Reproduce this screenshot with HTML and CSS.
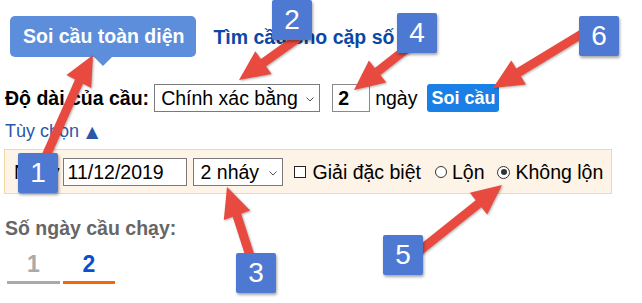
FILE: index.html
```html
<!DOCTYPE html>
<html lang="vi">
<head>
<meta charset="utf-8">
<title>Soi cầu</title>
<link rel="stylesheet" href="styles.css">
</head>
<body>
<div class="page">
  <div class="tabs">
    <span class="tab-active">Soi cầu toàn diện</span>
    <a class="tab-link">Tìm cầu cho cặp số</a>
  </div>

  <div class="row-length">
    <span class="label">Độ dài của cầu:</span>
    <div class="select sel-len">
      <span>Chính xác bằng</span>
      <svg class="chev" width="8" height="5" viewBox="0 0 8 5"><path d="M0.5 0.5 L4 4 L7.5 0.5" fill="none" stroke="#555" stroke-width="1"/></svg>
    </div>
    <div class="input num">2</div>
    <span class="unit">ngày</span>
    <button class="btn">Soi cầu</button>
  </div>

  <div class="toggle">Tùy chọn <span class="tri">▲</span></div>

  <div class="options">
    <span class="opt-label">Ngày</span>
    <div class="input date">11/12/2019</div>
    <div class="select sel-nhay">
      <span>2 nháy</span>
      <svg class="chev" width="8" height="5" viewBox="0 0 8 5"><path d="M0.5 0.5 L4 4 L7.5 0.5" fill="none" stroke="#555" stroke-width="1"/></svg>
    </div>
    <span class="check"><span class="sq"></span>Giải đặc biệt</span>
    <span class="radio r1"><span class="circ"></span>Lộn</span>
    <span class="radio r2"><span class="circ on"></span>Không lộn</span>
  </div>

  <div class="runs-title">Số ngày cầu chạy:</div>
  <div class="runs">
    <span class="run">1</span>
    <span class="run active">2</span>
  </div>
</div>

<div class="annot">
  <svg class="arrows" width="642" height="303" viewBox="0 0 642 303">
    <g class="arrow">
      <line x1="42" y1="165" x2="79.8" y2="79.7"/>
      <polygon points="93,55 91.2,88.1 66.5,74.9"/>
    </g>
    <g class="arrow">
      <line x1="298" y1="38" x2="261.8" y2="63.8"/>
      <polygon points="239,80 271.5,74 255.3,51.2"/>
    </g>
    <g class="arrow">
      <line x1="252" y1="262" x2="236.3" y2="213.4"/>
      <polygon points="227,187 250.2,210.6 223.8,220"/>
    </g>
    <g class="arrow">
      <line x1="410" y1="46" x2="376" y2="72.7"/>
      <polygon points="354,90 386.3,82.5 368.9,60.5"/>
    </g>
    <g class="arrow">
      <line x1="418" y1="252" x2="480" y2="202.5"/>
      <polygon points="502,185 487.2,214.6 469.8,192.8"/>
    </g>
    <g class="arrow">
      <line x1="585" y1="32" x2="516.9" y2="73.4"/>
      <polygon points="493,88 525.9,84.4 511.3,60.4"/>
    </g>
  </svg>
  <div class="mark m1">1</div>
  <div class="mark m2">2</div>
  <div class="mark m3">3</div>
  <div class="mark m4">4</div>
  <div class="mark m5">5</div>
  <div class="mark m6">6</div>
</div>
</body>
</html>
```

FILE: styles.css
```css
* { box-sizing: border-box; }

html, body {
  margin: 0;
  padding: 0;
  background: #fff;
}

body {
  position: relative;
  width: 642px;
  height: 303px;
  overflow: hidden;
  font-family: "Liberation Sans", Arial, sans-serif;
  font-size: 19.5px;
  line-height: 22px;
  color: #000;
}

.page {
  padding: 16px 0 0 5px;
}

/* top tabs */
.tabs {
  display: flex;
  align-items: center;
}

.tab-active {
  position: relative;
  margin-left: 5px;
  height: 41px;
  line-height: 41px;
  padding: 0 12px 0 13px;
  background: #5c8edb;
  color: #fff;
  font-weight: bold;
  border-radius: 5px;
}

.tab-active::after {
  content: "";
  position: absolute;
  left: 50%;
  bottom: -9px;
  margin-left: -9px;
  border-left: 9px solid transparent;
  border-right: 9px solid transparent;
  border-top: 9px solid #5c8edb;
}

.tab-link {
  margin-left: 17px;
  color: #0c47a6;
  font-weight: bold;
}

/* length row */
.row-length {
  display: flex;
  align-items: center;
  margin-top: 27px;
  height: 28px;
}

.label {
  font-weight: bold;
}

.select {
  display: flex;
  align-items: center;
  justify-content: space-between;
  height: 28px;
  border: 1px solid #7a7a7a;
  background: #fff;
}

.chev {
  display: block;
  margin-top: 2px;
}

.sel-len {
  width: 166px;
  margin-left: 5px;
  padding: 0 5px 0 6px;
}

.input {
  display: flex;
  align-items: center;
  height: 28px;
  border: 1px solid #8a8a8a;
  background: #fff;
}

.num {
  width: 38px;
  margin-left: 12px;
  padding-left: 5px;
  font-weight: bold;
}

.unit {
  margin-left: 5px;
}

.btn {
  margin-left: 10px;
  width: 72px;
  height: 28px;
  padding: 0;
  border: none;
  border-radius: 3px;
  background: #1a80e6;
  color: #fff;
  font-family: "Liberation Sans", Arial, sans-serif;
  font-size: 18px;
  font-weight: bold;
}

/* options toggle */
.toggle {
  margin-top: 9px;
  font-size: 18px;
  line-height: 21px;
  color: #2a58a8;
}

.tri {
  margin-left: 2px;
  font-family: "DejaVu Sans", sans-serif;
  font-size: 16px;
}

/* options box */
.options {
  display: flex;
  align-items: center;
  margin-top: 7px;
  margin-left: -1px;
  width: 608px;
  height: 45px;
  padding: 1px 0 0 9px;
  border: 1px solid #f3d9a4;
  background: #fdf3e6;
}

.date {
  width: 124px;
  margin-left: 3px;
  padding-left: 4px;
  border-color: #7a7a7a;
}

.sel-nhay {
  width: 90px;
  margin-left: 6px;
  padding: 0 5px 0 7px;
}

.check,
.radio {
  display: flex;
  align-items: center;
}

.check {
  margin-left: 11px;
}

.sq {
  width: 12px;
  height: 12px;
  margin-right: 7px;
  border: 1px solid #222;
  background: #fff;
}

.r1 { margin-left: 14px; }
.r2 { margin-left: 13px; }

.circ {
  position: relative;
  width: 12px;
  height: 12px;
  margin-right: 5px;
  border: 1px solid #333;
  border-radius: 50%;
  background: #fff;
}

.circ.on {
  width: 13px;
  height: 13px;
}

.circ.on::after {
  content: "";
  position: absolute;
  left: 2.5px;
  top: 2.5px;
  width: 6px;
  height: 6px;
  border-radius: 50%;
  background: #333;
}

/* runs */
.runs-title {
  margin-top: 23px;
  color: #666;
  font-weight: bold;
}

.runs {
  display: flex;
  margin-top: 12px;
}

.run {
  width: 53px;
  margin-left: 2px;
  padding-bottom: 4px;
  text-align: center;
  font-size: 23px;
  line-height: 26px;
  font-weight: bold;
  color: #aaa;
  border-bottom: 3px solid #aaa;
}

.run.active {
  width: 52px;
  margin-left: 3px;
  color: #0a4fcf;
  border-bottom-color: #f5660a;
}

/* annotation overlay */
.annot {
  position: absolute;
  left: 0;
  top: 0;
  width: 642px;
  height: 303px;
  pointer-events: none;
}

.arrows {
  position: absolute;
  left: 0;
  top: 0;
}

.arrow {
  filter: drop-shadow(1px 1px 1px rgba(0, 0, 0, 0.3));
}

.arrow line {
  stroke: #e84a3f;
  stroke-width: 9;
}

.arrow polygon {
  fill: #e84a3f;
}

.mark {
  position: absolute;
  width: 40px;
  height: 40px;
  display: flex;
  align-items: center;
  justify-content: center;
  background: #4e79d3;
  color: #fff;
  font-size: 28px;
  border-radius: 2px;
  box-shadow: 1px 2px 3px rgba(0, 0, 0, 0.35);
}

.m1 { left: 18px; top: 153px; }
.m2 { left: 272px; top: 0; }
.m3 { left: 236px; top: 253px; }
.m4 { left: 397px; top: 13px; }
.m5 { left: 383px; top: 235px; }
.m6 { left: 579px; top: 16px; }
```
